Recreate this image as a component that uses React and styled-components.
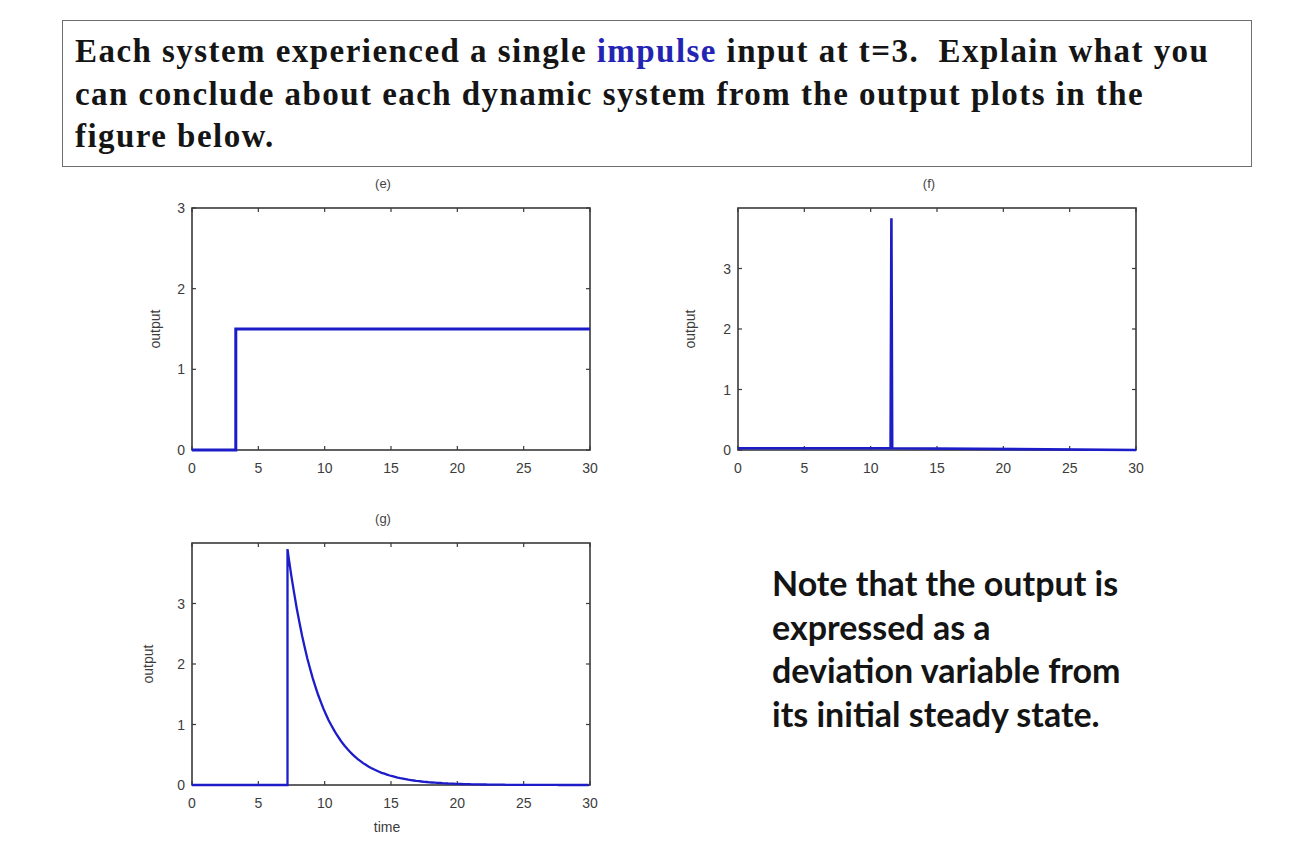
import React from 'react';
import styled, { createGlobalStyle } from 'styled-components';

const GlobalStyle = createGlobalStyle`
  html, body {
    margin: 0;
    padding: 0;
    background: #ffffff;
  }
`;

// axes geometry inside each plot svg
const AX = { left: 62, top: 36, width: 398, height: 242 };
const BLUE = '#1c1cc8';

const sx = (t) => AX.left + (t / 30) * AX.width;
const sy = (v, yMax) => AX.top + AX.height - (v / yMax) * AX.height;

const toPoints = (data, yMax) =>
  data.map(([t, v]) => `${sx(t).toFixed(1)},${sy(v, yMax).toFixed(1)}`).join(' ');

const stepData = [[0, 0], [3.3, 0], [3.3, 1.5], [30, 1.5]];
const spikeData = [[0, 0.03], [11.5, 0.03], [11.56, 3.83], [11.62, 0.03], [30, 0]];
const decayData = (() => {
  const pts = [[0, 0], [7.2, 0], [7.2, 3.9]];
  for (let t = 7.3; t <= 30; t += 0.2) {
    pts.push([t, 3.9 * Math.exp(-(t - 7.2) / 2.4)]);
  }
  return pts;
})();

const Plot = ({ title, yMax, yTicks, data, lineWidth, yLabelX, xLabel }) => {
  const xTicks = [0, 5, 10, 15, 20, 25, 30];
  const bottom = AX.top + AX.height;
  const right = AX.left + AX.width;
  const midY = AX.top + AX.height / 2;
  return (
    <PlotSvg width="480" height="330" viewBox="0 0 480 330">
      <TitleText x={AX.left + AX.width / 2 - 8} y="16">{title}</TitleText>
      <rect x={AX.left} y={AX.top} width={AX.width} height={AX.height} fill="#fff" stroke="#3a3a3a" strokeWidth="1.6" />
      {xTicks.map((t) => (
        <g key={`x${t}`}>
          <line x1={sx(t)} y1={bottom} x2={sx(t)} y2={bottom - 4} stroke="#3a3a3a" strokeWidth="1.2" />
          <line x1={sx(t)} y1={AX.top} x2={sx(t)} y2={AX.top + 4} stroke="#3a3a3a" strokeWidth="1.2" />
          <TickText x={sx(t)} y={bottom + 23} textAnchor="middle">{t}</TickText>
        </g>
      ))}
      {yTicks.map((v) => (
        <g key={`y${v}`}>
          <line x1={AX.left} y1={sy(v, yMax)} x2={AX.left + 4} y2={sy(v, yMax)} stroke="#3a3a3a" strokeWidth="1.2" />
          <line x1={right} y1={sy(v, yMax)} x2={right - 4} y2={sy(v, yMax)} stroke="#3a3a3a" strokeWidth="1.2" />
          <TickText x={AX.left - 7} y={sy(v, yMax) + 5} textAnchor="end">{v}</TickText>
        </g>
      ))}
      <polyline points={toPoints(data, yMax)} fill="none" stroke={BLUE} strokeWidth={lineWidth} strokeLinejoin="miter" />
      <AxisLabel
        x={yLabelX}
        y={midY}
        textAnchor="middle"
        transform={`rotate(-90 ${yLabelX} ${midY})`}
      >
        output
      </AxisLabel>
      {xLabel && (
        <AxisLabel x={AX.left + AX.width / 2 - 4} y={bottom + 47} textAnchor="middle">{xLabel}</AxisLabel>
      )}
    </PlotSvg>
  );
};

const App = () => {
  return (
    <>
      <GlobalStyle />
      <Page>
        <QuestionBox>
          Each system experienced a single <Highlight>impulse</Highlight> input at t=3.&nbsp; Explain what you<br />
          can conclude about each dynamic system from the output plots in the<br />
          figure below.
        </QuestionBox>
        <FigureGrid>
          <Cell>
            <Plot title="(e)" yMax={3} yTicks={[0, 1, 2, 3]} data={stepData} lineWidth={3} yLabelX={30} />
          </Cell>
          <Cell>
            <Plot title="(f)" yMax={4} yTicks={[0, 1, 2, 3]} data={spikeData} lineWidth={2.6} yLabelX={19} />
          </Cell>
          <Cell>
            <Plot title="(g)" yMax={4} yTicks={[0, 1, 2, 3]} data={decayData} lineWidth={2.3} yLabelX={23} xLabel="time" />
          </Cell>
          <NoteCell>
            <Note>
              Note that the output is<br />
              expressed as a<br />
              deviation variable from<br />
              its initial steady state.
            </Note>
          </NoteCell>
        </FigureGrid>
      </Page>
    </>
  );
};
export default App;

const Page = styled.div`
  width: 1293px;
  height: 848px;
  overflow: hidden;
  background: #ffffff;
  padding-top: 20px;
  box-sizing: border-box;
`;

const QuestionBox = styled.div`
  margin-left: 62px;
  width: 1190px;
  height: 147px;
  box-sizing: border-box;
  border: 1.5px solid #6e6e6e;
  padding: 9px 0 0 12px;
  font-family: "Liberation Serif", "Times New Roman", serif;
  font-weight: bold;
  font-size: 33px;
  letter-spacing: 1.45px;
  line-height: 42.5px;
  color: #151515;
  white-space: nowrap;
`;

const Highlight = styled.span`
  color: #2424b4;
`;

const FigureGrid = styled.div`
  display: grid;
  grid-template-columns: 546px 480px;
  grid-auto-rows: 330px;
  row-gap: 5px;
  margin-left: 130px;
  margin-top: 5px;
`;

const Cell = styled.div`
  display: flex;
`;

const NoteCell = styled.div`
  padding: 54px 0 0 96px;
`;

const Note = styled.div`
  font-family: Lato, "Open Sans", sans-serif;
  font-weight: 700;
  font-size: 34px;
  line-height: 43.5px;
  color: #141414;
  white-space: nowrap;
`;

const PlotSvg = styled.svg`
  display: block;
`;

const TitleText = styled.text`
  font-family: "Liberation Sans", Arial, sans-serif;
  font-size: 13px;
  fill: #444;
  text-anchor: middle;
`;

const TickText = styled.text`
  font-family: "Liberation Sans", Arial, sans-serif;
  font-size: 14px;
  fill: #3c3c3c;
`;

const AxisLabel = styled.text`
  font-family: "Liberation Sans", Arial, sans-serif;
  font-size: 14px;
  fill: #3c3c3c;
`;
